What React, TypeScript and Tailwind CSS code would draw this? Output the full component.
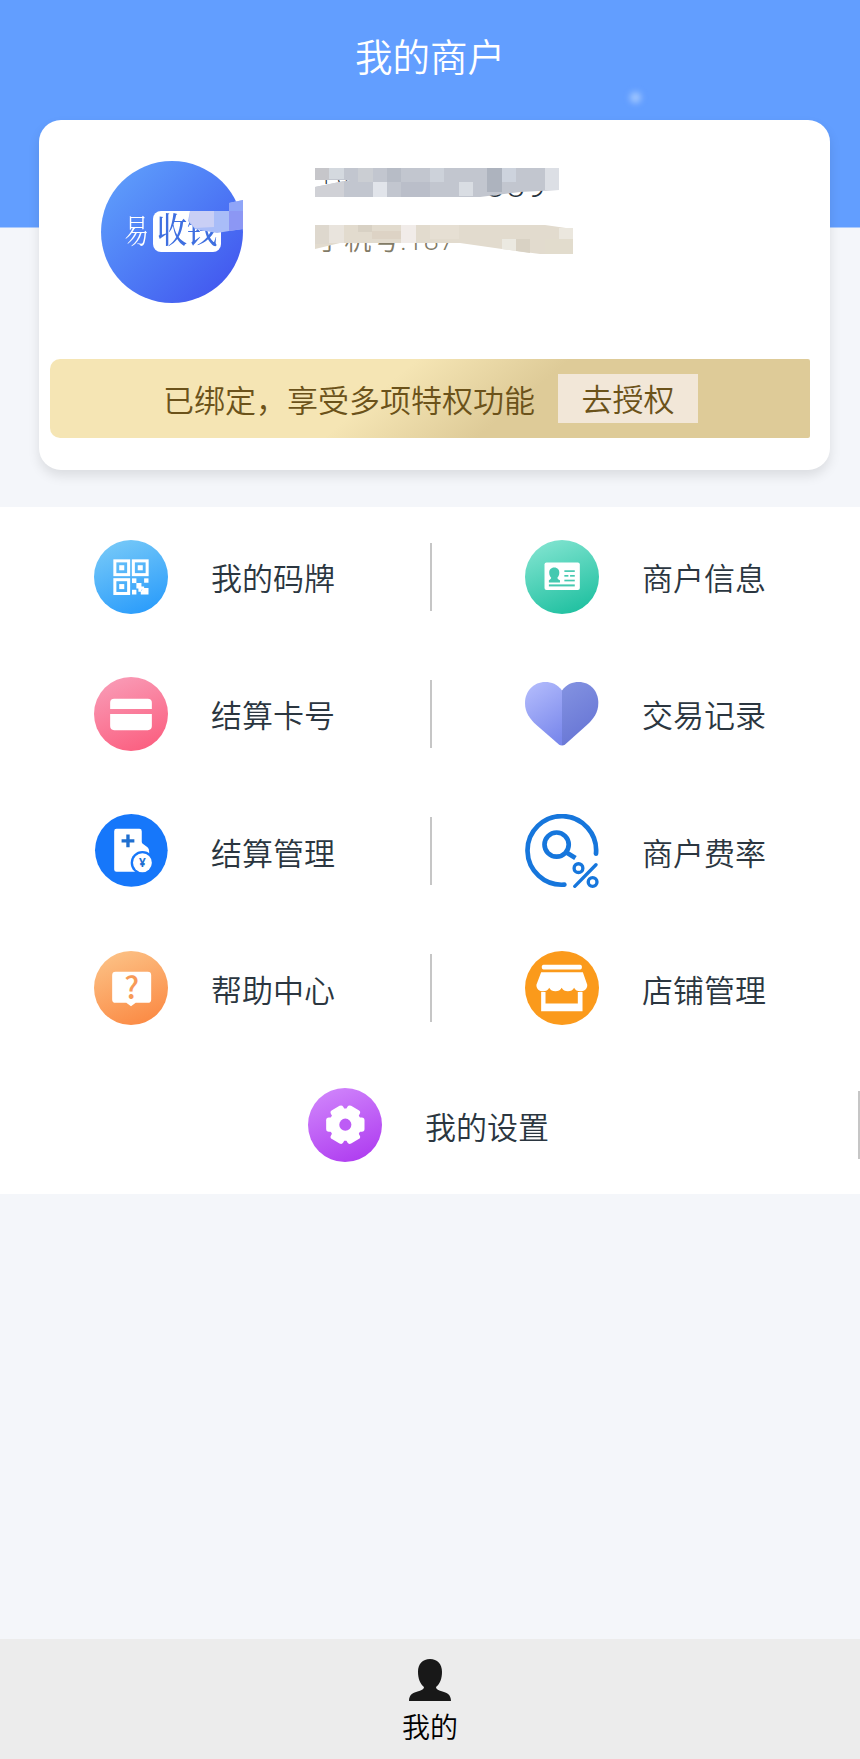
import type { ReactNode } from "react";

interface MenuItem {
  label: string;
  icon: ReactNode;
}

function Gradient({ id, from, to }: { id: string; from: string; to: string }) {
  return (
    <linearGradient id={id} x1="0.3" y1="0" x2="0.7" y2="1">
      <stop offset="0" stopColor={from} />
      <stop offset="1" stopColor={to} />
    </linearGradient>
  );
}

function IconBase({
  id,
  from,
  to,
  children,
}: {
  id: string;
  from: string;
  to: string;
  children: ReactNode;
}) {
  return (
    <svg viewBox="0 0 220 220" className="w-[74px] h-[74px] shrink-0">
      <Gradient id={id} from={from} to={to} />
      <circle cx="110" cy="110" r="110" fill={`url(#${id})`} />
      {children}
    </svg>
  );
}

function QrIcon() {
  return (
    <IconBase id="qr" from="#75c8f8" to="#2a9cfb">
      <g fill="none" stroke="#fff" strokeWidth="9">
        <rect x="62" y="62" width="41" height="41" />
        <rect x="117" y="62" width="41" height="41" />
        <rect x="62" y="118" width="41" height="41" />
      </g>
      <g fill="#fff">
        <rect x="75" y="75" width="15" height="15" />
        <rect x="130" y="75" width="15" height="15" />
        <rect x="75" y="131" width="15" height="15" />
        <rect x="113" y="114" width="13" height="14" />
        <rect x="149" y="114" width="13" height="13" />
        <rect x="113" y="148" width="13" height="14" />
        <path d="M126 128h15v10h8v10h-8v6h-9v-10h-6z" />
        <path d="M139 162v-9l9-10h14v19z" />
      </g>
    </IconBase>
  );
}

function CardIcon() {
  return (
    <IconBase id="card" from="#f99ab5" to="#fb5f80">
      <path d="M48 95V77a12 12 0 0 1 12-12h100a12 12 0 0 1 12 12v18z" fill="#fff" />
      <path d="M48 110h124v36a12 12 0 0 1-12 12H60a12 12 0 0 1-12-12z" fill="#fff" />
    </IconBase>
  );
}

function IdIcon() {
  return (
    <IconBase id="idcard" from="#7fe3cf" to="#1fc0a0">
      <rect x="58" y="67" width="105" height="82" rx="6" fill="#fff" />
      <g fill="#45c9b0">
        <path d="M87 82c-10 0-15 7-15 15 0 7 3 12 6 15-1 5-6 6-7 8v6h33v-6c-2-2-7-3-8-8 3-3 6-8 6-15 0-8-5-15-15-15z" />
        <rect x="71" y="132" width="77" height="6" />
        <rect x="117" y="90" width="31" height="5" />
        <rect x="117" y="104" width="12" height="5" />
        <rect x="134" y="104" width="14" height="5" />
        <rect x="117" y="118" width="31" height="5" />
      </g>
    </IconBase>
  );
}

function HeartIcon() {
  return (
    <svg viewBox="0 0 220 220" className="w-[74px] h-[74px] shrink-0">
      <Gradient id="heart-l" from="#b0b9fb" to="#7a88ec" />
      <Gradient id="heart-r" from="#8190e0" to="#6573d4" />
      <path
        d="M110 40C96 21 79 15 60 15 26 15 0 42 0 77c0 28 14 47 34 66l66 57q5 4 10 4z"
        fill="url(#heart-l)"
      />
      <path
        d="M110 40c14-19 31-25 50-25 34 0 58 27 58 62 0 28-14 47-34 66l-64 57q-5 4-10 4z"
        fill="url(#heart-r)"
      />
    </svg>
  );
}

function SettleIcon() {
  return (
    <svg viewBox="0 0 220 220" className="w-[74px] h-[74px] shrink-0">
      <circle cx="111" cy="108" r="108" fill="#1677fa" />
      <path
        d="M67 44h68q7 0 7 7v32q0 4 5 7l12 9q5 4 5 13v60H67q-7 0-7-7V51q0-7 7-7z"
        fill="#fff"
      />
      <path d="M82 80h38M101 61v38" stroke="#1f6fd0" strokeWidth="10" />
      <circle cx="144" cy="145" r="35" fill="#1677fa" />
      <circle cx="144" cy="145" r="28" fill="#fff" />
      <text
        x="144"
        y="157"
        textAnchor="middle"
        fontSize="35"
        fontWeight="700"
        fill="#1f6fd0"
        fontFamily="Noto Sans, sans-serif"
      >
        ¥
      </text>
    </svg>
  );
}

function RateIcon() {
  return (
    <svg viewBox="0 0 220 220" className="w-[74px] h-[74px] shrink-0">
      <g fill="none" stroke="#1676dc" strokeWidth="14" strokeLinecap="round">
        <path d="M211 118A102 102 0 1 0 117 210" />
        <circle cx="94" cy="91" r="36" />
        <path d="M122 114l28 17" strokeLinecap="butt" />
        <g strokeWidth="10">
          <circle cx="159" cy="161" r="13" />
          <circle cx="201" cy="202" r="13" />
          <path d="M211 151L148 215" />
        </g>
      </g>
    </svg>
  );
}

function HelpIcon() {
  return (
    <IconBase id="help" from="#fcc084" to="#fb8a44">
      <path
        d="M64 62h96q10 0 10 10v72q0 10-10 10h-36l-14 10-14-10H64q-10 0-10-10V72q0-10 10-10z"
        fill="#fff"
      />
      <text
        x="112"
        y="143"
        textAnchor="middle"
        fontSize="90"
        fontWeight="500"
        fill="#f79a58"
        fontFamily="Noto Sans CJK SC, sans-serif"
      >
        ?
      </text>
    </IconBase>
  );
}

function ShopIcon() {
  return (
    <IconBase id="shop" from="#fb9a1b" to="#fb9a1b">
      <g fill="#fff">
        <rect x="50" y="41" width="119" height="14" rx="5" />
        <path d="M48 63h124l13 37c2 22-32 26-39 9-6 14-31 14-37 0-6 14-31 14-37 0-7 17-40 13-38-9z" />
        <path d="M48 122h13v34h96v-34h14v57H48z" />
      </g>
    </IconBase>
  );
}

function SettingsIcon() {
  return (
    <IconBase id="gear" from="#cf83fb" to="#af3df0">
      <g fill="#fff">
        <circle cx="111" cy="109" r="48" />
        {[0, 60, 120, 180, 240, 300].map((deg) => (
          <rect
            key={deg}
            x="137"
            y="88"
            width="31"
            height="42"
            rx="8"
            transform={`rotate(${deg} 111 109)`}
          />
        ))}
      </g>
      <circle cx="111" cy="109" r="18" fill="#bd5cf5" />
    </IconBase>
  );
}

const rows: [MenuItem, MenuItem][] = [
  [
    { label: "我的码牌", icon: <QrIcon /> },
    { label: "商户信息", icon: <IdIcon /> },
  ],
  [
    { label: "结算卡号", icon: <CardIcon /> },
    { label: "交易记录", icon: <HeartIcon /> },
  ],
  [
    { label: "结算管理", icon: <SettleIcon /> },
    { label: "商户费率", icon: <RateIcon /> },
  ],
  [
    { label: "帮助中心", icon: <HelpIcon /> },
    { label: "店铺管理", icon: <ShopIcon /> },
  ],
];

function MenuLabel({ item }: { item: MenuItem }) {
  return (
    <>
      {item.icon}
      <span className="ml-[43px] text-[31px] leading-none text-[#2b3640] whitespace-nowrap">
        {item.label}
      </span>
    </>
  );
}

function Divider() {
  return <div className="ml-auto w-[2.5px] h-[68px] bg-[#c6c6c6]" />;
}

function Avatar() {
  return (
    <div className="relative w-[142px] h-[142px] shrink-0 rounded-full bg-linear-to-br from-[#5e9cfb] from-10% to-[#4357ef] to-90% flex items-center font-['Liberation_Serif','Noto_Serif_CJK_SC','Noto_Sans_CJK_SC',serif]">
      <span className="ml-[19px] -mr-[3px] scale-x-[0.75] text-[33px] leading-none text-white">
        易
      </span>
      <div className="ml-[3px] mt-[-2px] flex h-[41px] w-[68px] items-center justify-center rounded-[8px] bg-white">
        <span className="scale-x-[0.86] text-[35px] font-medium leading-none text-[#3f6fe0] whitespace-nowrap">
          收钱
        </span>
      </div>
      {/* privacy mosaic over the logo */}
      <svg viewBox="0 0 56 36" className="absolute left-[87px] top-[38px] w-[56px] h-[36px]">
        <path d="M2 12h39V4l14-3v29l-14 2-12 2-22-4-7-8z" fill="#a9bdf8" />
        <path d="M2 12h24v16l-19 1-6-7z" fill="#c9cff5" />
        <path d="M41 4l14-3v12H41z" fill="#8fa5f8" />
        <path d="M41 12h14v18l-14 2z" fill="#8c97f4" />
      </svg>
    </div>
  );
}

// masked merchant name and phone number
function MaskedInfo() {
  return (
    <svg
      viewBox="315 160 260 100"
      className="w-[260px] h-[100px] shrink-0"
      fontFamily="Roboto, Noto Sans CJK SC, sans-serif"
    >
      <text x="320" y="184" fontSize="20" letterSpacing="6" fill="#27323c">
        18
      </text>
      <text x="486" y="197" fontSize="32" letterSpacing="3" fill="#27323c">
        889
      </text>
      <path d="M315 168H559V190L520 192 480 197H315V187L360 178V180H315Z" fill="#c2c6cf" />
      <g>
        <rect x="315" y="168" width="14" height="12" fill="#c6c6ca" />
        <rect x="329" y="168" width="15" height="11" fill="#d4d9df" />
        <path d="M315 187l29-6v16h-29z" fill="#d0d1d6" />
        <rect x="358" y="168" width="15" height="14" fill="#cbced3" />
        <rect x="373" y="182" width="14" height="15" fill="#e1e4ea" />
        <rect x="387" y="168" width="14" height="14" fill="#b7bcc6" />
        <rect x="401" y="182" width="29" height="15" fill="#babec9" />
        <rect x="430" y="168" width="14" height="14" fill="#cdd2da" />
        <rect x="459" y="182" width="14" height="14" fill="#d9dde3" />
        <rect x="487" y="168" width="15" height="24" fill="#adb3be" />
        <rect x="502" y="168" width="14" height="14" fill="#cdd3dd" />
        <rect x="545" y="168" width="14" height="22" fill="#dcdfe5" />
      </g>
      <text x="316" y="250" fontSize="27" letterSpacing="1.2" fill="#827b66">
        手机号:187
      </text>
      <path d="M315 225H545L573 229V254H540L502 249 460 243H340L315 249Z" fill="#e2dbce" />
      <g>
        <rect x="315" y="225" width="14" height="19" fill="#ded8ce" />
        <rect x="329" y="225" width="15" height="18" fill="#e9e4dd" />
        <rect x="358" y="225" width="14" height="7" fill="#d8d1c4" />
        <rect x="372" y="231" width="29" height="8" fill="#ddd3c5" />
        <rect x="401" y="225" width="15" height="18" fill="#f1ece9" />
        <rect x="430" y="225" width="29" height="14" fill="#e6dfd3" />
        <path d="M502 239h14v12l-14-2z" fill="#ebe9e1" />
        <path d="M516 239h14v14l-14-2z" fill="#d9d2c4" />
        <rect x="545" y="239" width="28" height="15" fill="#e2dccd" />
        <rect x="559" y="228" width="14" height="11" fill="#ebe7de" />
      </g>
    </svg>
  );
}

function ProfileCard() {
  return (
    <section className="mt-[6px] ml-[39px] w-[791px] h-[350px] rounded-[22px] bg-white shadow-[0_6px_12px_rgba(0,0,0,0.1)]">
      <div className="flex h-[239px] pl-[62px] pt-[41px]">
        <Avatar />
        <div className="ml-[72px] -mt-px">
          <MaskedInfo />
        </div>
      </div>
      <div className="ml-[11px] flex h-[79px] w-[760px] items-center rounded-l-[10px] rounded-r-[2px] bg-[linear-gradient(140deg,#f5e5b4_43%,#decb98_61%)] pl-[113px] text-[31px] leading-none text-[#6b521a]">
        <span className="whitespace-nowrap">已绑定，享受多项特权功能</span>
        <button className="ml-[23px] flex h-[49px] w-[140px] items-center justify-center bg-[#f2e7d8] pb-[3px]">
          去授权
        </button>
      </div>
    </section>
  );
}

function PersonIcon() {
  return (
    <svg viewBox="0 0 126 126" className="w-[42px] h-[42px]">
      <path
        d="M63 0c-22 0-36 15-36 38 0 20 6 36 18 46 0 6-5 9-12 11C12 100 0 106 0 126h126c0-20-12-26-33-31-7-2-12-5-12-11 12-10 18-26 18-46C99 15 85 0 63 0z"
        fill="#181818"
      />
    </svg>
  );
}

export default function App() {
  return (
    <div className="flex h-[1759px] w-[860px] flex-col overflow-hidden bg-[#f4f6fa] font-['Noto_Sans_CJK_SC',sans-serif] font-[350]">
      <header className="h-[507px] shrink-0 bg-[linear-gradient(#629eff_0,#629eff_227px,#f4f6fa_228px)]">
        <div className="relative flex h-[114px] items-center justify-center pb-[4px]">
          <h1 className="text-[37.5px] leading-none text-white">我的商户</h1>
          <div className="absolute left-[630px] top-[92px] h-[11px] w-[11px] rounded-full bg-[#a3c8ff] blur-[3px]" />
        </div>
        <ProfileCard />
      </header>

      <main className="flex h-[687px] shrink-0 flex-col bg-white pt-[1px]">
        {rows.map(([left, right]) => (
          <div key={left.label} className="grid flex-1 grid-cols-[432px_428px]">
            <div className="flex items-center pl-[94px]">
              <MenuLabel item={left} />
              <Divider />
            </div>
            <div className="flex items-center pl-[93px]">
              <MenuLabel item={right} />
            </div>
          </div>
        ))}
        <div className="flex flex-1 items-center pl-[308px]">
          <MenuLabel item={{ label: "我的设置", icon: <SettingsIcon /> }} />
          <Divider />
        </div>
      </main>

      <footer className="mt-auto flex h-[120px] flex-col items-center bg-[#ececec] pt-[20px] text-black">
        <PersonIcon />
        <span className="mt-[11px] text-[28px] leading-none">我的</span>
      </footer>
    </div>
  );
}
